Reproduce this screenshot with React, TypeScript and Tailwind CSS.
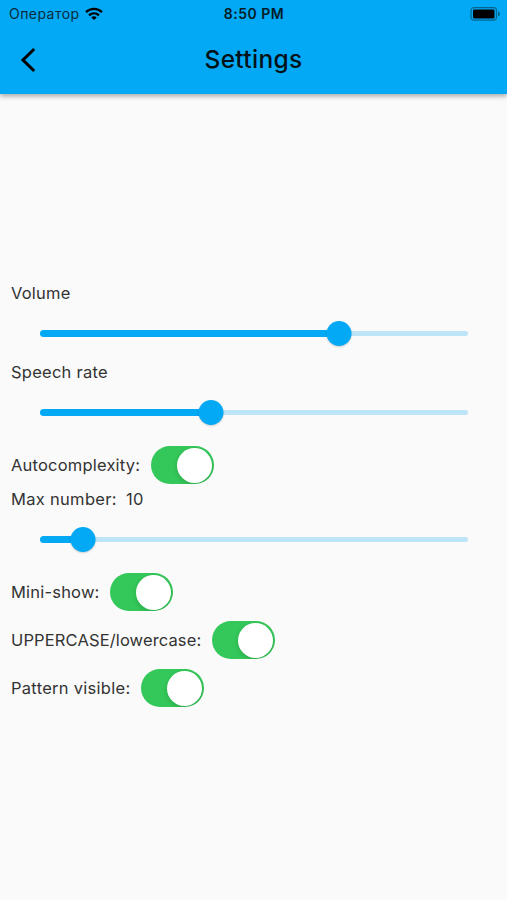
import { useState } from 'react'

type SliderProps = {
  label: string
  value: number
  onChange: (value: number) => void
}

function Slider({ label, value, onChange }: SliderProps) {
  const position = `${value}%`

  return (
    <div className="h-[60px] pl-10 pr-[39.5px] flex items-center">
      <div className="relative w-full h-[25px] flex items-center">
        <div className="w-full h-[5px] rounded-full bg-[#bde5f9]" />
        <div className="absolute left-0 h-[7px] rounded-full bg-[#03a9f4]" style={{ width: position }} />
        <div
          className="absolute size-[25px] -translate-x-1/2 rounded-full bg-[#03a9f4] shadow-[0_1px_2px_rgba(0,0,0,0.18)]"
          style={{ left: position }}
        />
        <input
          type="range"
          aria-label={label}
          value={value}
          onChange={(e) => onChange(Number(e.target.value))}
          className="absolute inset-0 w-full opacity-0 cursor-pointer"
        />
      </div>
    </div>
  )
}

type SwitchRowProps = {
  label: string
  labelClassName: string
}

function SwitchRow({ label, labelClassName }: SwitchRowProps) {
  const [checked, setChecked] = useState(true)

  return (
    <div className="h-[46px] pl-[11px] flex items-center">
      <span className={labelClassName}>{label}</span>
      <button
        role="switch"
        aria-checked={checked}
        aria-label={label}
        onClick={() => setChecked(!checked)}
        className={`w-[63px] h-[38px] px-[2px] rounded-full overflow-hidden flex items-center transition-colors ${
          checked ? 'bg-[#34c759] justify-end' : 'bg-[#e0e0e2] justify-start'
        }`}
      >
        <span className="size-[35px] rounded-full bg-white shadow-[0_2px_5px_rgba(0,0,0,0.15)]" />
      </button>
    </div>
  )
}

function StatusBar() {
  return (
    <div className="relative h-[27px] flex items-center justify-between pl-[9px] pr-[6px]">
      <div className="flex items-center gap-1 text-[14px] text-[#062b3c]">
        <span className="w-[72px] tracking-[0.45px]">Оператор</span>
        <svg width="18" height="14" viewBox="0 0 18 14" fill="none" stroke="#000" strokeWidth="2.3">
          <path d="M1 5.1C5.5.7 12.5.7 17 5.1" />
          <path d="M4 8.3c2.9-2.7 7.1-2.7 10 0" />
          <path d="M6.3 10.4c1.6-1.4 3.8-1.4 5.4 0L9 13.1z" fill="#000" stroke="none" />
        </svg>
      </div>
      <span className="absolute inset-x-0 pl-px text-center text-[14px] font-semibold tracking-[0.5px] text-[#041c28]">
        8:50 PM
      </span>
      <svg width="31" height="14" viewBox="0 0 31 14">
        <rect x="1" y="0.7" width="25.5" height="12.4" rx="3" fill="none" stroke="#036691" strokeWidth="1.2" />
        <rect x="3" y="2.6" width="21.5" height="8.8" rx="1.3" fill="#000" />
        <path d="M28 4.6c1.6.5 2 1.3 2 2.3s-.4 1.8-2 2.3z" fill="#036691" />
      </svg>
    </div>
  )
}

export default function App() {
  const [volume, setVolume] = useState(70)
  const [speechRate, setSpeechRate] = useState(40)
  const [maxNumber, setMaxNumber] = useState(10)

  return (
    <div className="h-screen flex flex-col bg-[#fafafa] font-['Inter','Liberation_Sans',sans-serif] text-[16.5px] text-[#333333]">
      <header className="h-[94px] shrink-0 bg-[#03a9f4] shadow-[0_2px_5px_rgba(0,0,0,0.35)]">
        <StatusBar />
        <div className="h-[65px] grid grid-cols-[56px_1fr_56px] items-center">
          <button aria-label="Back" className="justify-self-center">
            <svg width="18" height="26" viewBox="0 0 18 26" fill="none" stroke="#000" strokeWidth="3">
              <path d="M15.2 2 4 13l11.2 11" />
            </svg>
          </button>
          <h1 className="text-center text-[24.5px] font-medium tracking-[0.3px] text-[#031118]">Settings</h1>
        </div>
      </header>

      <main className="flex-1 flex flex-col justify-center">
        <div className="h-5 leading-5 pl-[11px] tracking-[0.2px]">Volume</div>
        <Slider label="Volume" value={volume} onChange={setVolume} />
        <div className="h-[19px] leading-[18px] pl-[11px] tracking-[0.25px]">Speech rate</div>
        <Slider label="Speech rate" value={speechRate} onChange={setSpeechRate} />
        <SwitchRow label="Autocomplexity:" labelClassName="w-[140px] tracking-[0.2px]" />
        <div className="h-[21px] leading-[23px] pl-[11px] tracking-[0.3px] flex">
          <span className="w-[115px]">Max number:</span>
          <span>{maxNumber}</span>
        </div>
        <Slider label="Max number" value={maxNumber} onChange={setMaxNumber} />
        <div className="flex flex-col gap-0.5">
          <SwitchRow label="Mini-show:" labelClassName="w-[98.5px] tracking-[0.2px]" />
          <SwitchRow label="UPPERCASE/lowercase:" labelClassName="w-[201px] tracking-[0.13px]" />
          <SwitchRow label="Pattern visible:" labelClassName="w-[130px] tracking-[0.28px]" />
        </div>
      </main>
    </div>
  )
}
